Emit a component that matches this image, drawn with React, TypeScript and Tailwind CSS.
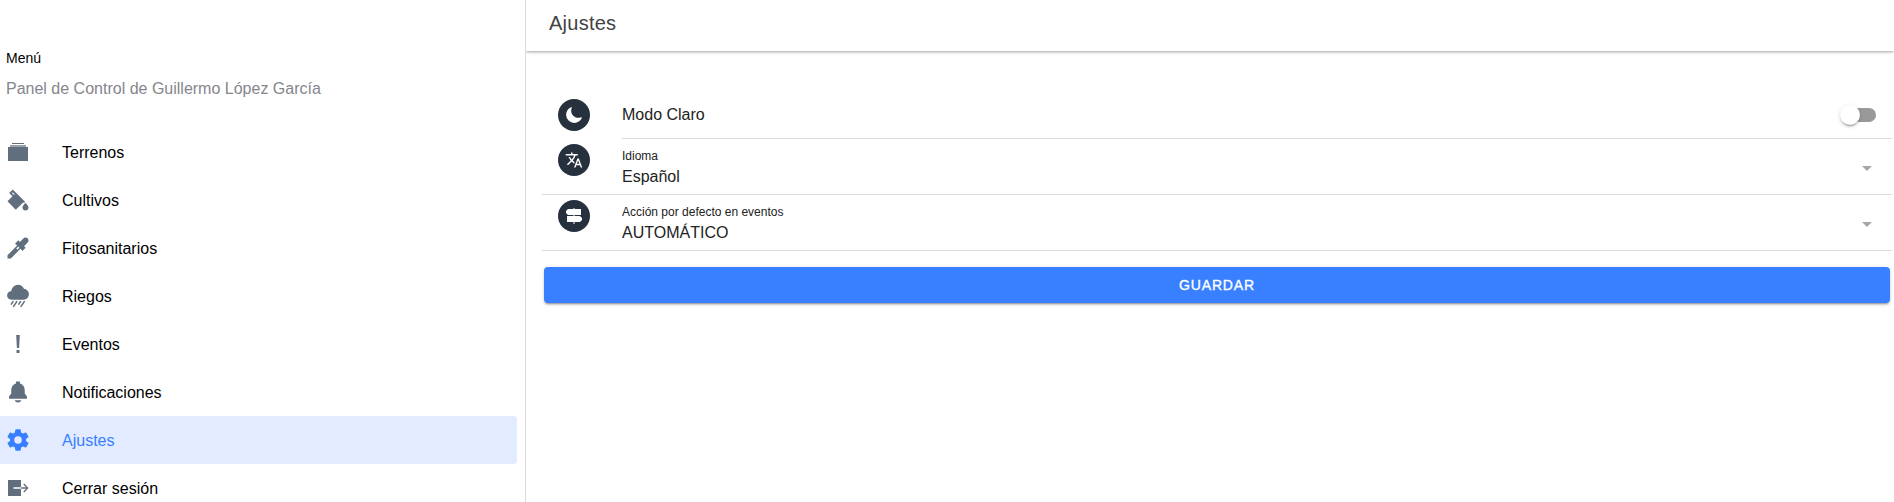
import React from "react";
import type { ReactNode } from "react";
import {
  IoColorFillSharp,
  IoEyedropSharp,
  IoRainySharp,
  IoNotificationsSharp,
  IoSettingsSharp,
  IoMoon,
} from "react-icons/io5";
import { MdTranslate } from "react-icons/md";

type IconProps = { className?: string };

function AlbumsIcon({ className }: IconProps) {
  return (
    <svg className={className} viewBox="0 0 24 24" fill="currentColor">
      <path d="M6 3h12v1H6z" />
      <path d="M4 5h16v2H4z" opacity=".65" />
      <path d="M2 7h20v14H2z" />
    </svg>
  );
}

function AlertIcon({ className }: IconProps) {
  return (
    <svg className={className} viewBox="0 0 24 24" fill="currentColor">
      <path d="M10.2 3h3.6l-.7 13h-2.2zM10.5 18h3v3h-3z" />
    </svg>
  );
}

function ExitIcon({ className }: IconProps) {
  return (
    <svg className={className} viewBox="0 0 24 24" fill="currentColor">
      <path d="M2 4h13v7.3H7.5v1.4H15V20H2z" />
      <path d="M15 11.3h5l-2.7-2.7 1-1 4.2 4.4-4.2 4.4-1-1 2.7-2.7h-5z" />
    </svg>
  );
}

function SignsIcon({ className }: IconProps) {
  return (
    <svg className={className} viewBox="0 0 18 18" fill="currentColor">
      <path d="M8.5 1h1v1H16v6H3L1 6V4l2-2h5.5z" />
      <path d="M2 9h13l2 2v2l-2 2H9.5v2h-1v-2H2z" />
      <path d="M8.5 7.5h1v2h-1z" />
    </svg>
  );
}

const menu: { label: string; icon: React.ComponentType<IconProps>; active?: boolean }[] = [
  { label: "Terrenos", icon: AlbumsIcon },
  { label: "Cultivos", icon: IoColorFillSharp },
  { label: "Fitosanitarios", icon: IoEyedropSharp },
  { label: "Riegos", icon: IoRainySharp },
  { label: "Eventos", icon: AlertIcon },
  { label: "Notificaciones", icon: IoNotificationsSharp },
  { label: "Ajustes", icon: IoSettingsSharp, active: true },
  { label: "Cerrar sesión", icon: ExitIcon },
];

function Badge({ children }: { children: ReactNode }) {
  return (
    <span className="flex size-8 shrink-0 items-center justify-center rounded-full bg-[#27313e] text-white">
      {children}
    </span>
  );
}

function SelectRow({ icon, label, value }: { icon: ReactNode; label: string; value: string }) {
  return (
    <div className="flex h-14 items-start border-b border-[#dcdcdc] pr-5 pl-4">
      <div className="pt-[5px]">
        <Badge>{icon}</Badge>
      </div>
      <div className="ml-8 flex-1 pt-[9px]">
        <div className="text-xs leading-4 text-[#222]">{label}</div>
        <div className="mt-[3px] text-base leading-5 text-[#222]">{value}</div>
      </div>
      <svg className="mt-[27px] h-[5px] w-[10px]" viewBox="0 0 10 5">
        <path d="M0 0h10L5 5z" fill="#a6a6a6" />
      </svg>
    </div>
  );
}

export default function App() {
  return (
    <div className="flex h-[502px] w-full overflow-hidden bg-white font-['Liberation_Sans',Arial,sans-serif] text-black">
      <aside className="h-full w-[526px] shrink-0 overflow-hidden border-r border-[#dadada] pt-12">
        <h1 className="pl-1.5 text-sm leading-5">Menú</h1>
        <p className="mt-[11px] pl-1.5 text-base leading-5 text-[#85868c]">
          Panel de Control de Guillermo López García
        </p>
        <nav className="mt-[29px] w-[517px]">
          {menu.map(({ label, icon: Icon, active }) => (
            <a
              key={label}
              className={
                active
                  ? "flex h-12 items-center rounded-r bg-[#e2ebff] pl-1.5 text-[#3880ff]"
                  : "flex h-12 items-center pl-1.5"
              }
            >
              <Icon className={active ? "size-6 text-[#3880ff]" : "size-6 text-[#616e7e]"} />
              <span className="ml-8 pt-0.5 text-base leading-6">{label}</span>
            </a>
          ))}
        </nav>
      </aside>
      <main className="min-w-0 flex-1 overflow-hidden">
        <header className="flex h-[51px] items-center pb-[5px] pl-[23px] shadow-[0_2px_4px_-1px_rgba(0,0,0,0.2),0_1px_2px_rgba(0,0,0,0.2)]">
          <h2 className="text-xl tracking-[0.0125em] text-[#424242]">Ajustes</h2>
        </header>
        <section className="pt-[39px] pr-0.5 pl-4">
          <div className="flex h-[49px] pl-4">
            <div className="pt-[9px]">
              <Badge>
                <IoMoon className="size-[18px]" />
              </Badge>
            </div>
            <div className="ml-8 flex flex-1 justify-between border-b border-[#dcdcdc] pr-4">
              <span className="pt-[13px] text-base leading-6 text-[#222]">Modo Claro</span>
              <span className="mt-[18px] flex h-3.5 w-[34px] items-center rounded-full bg-[#999]">
                <span className="-ml-0.5 size-5 shrink-0 rounded-full bg-white shadow-[0_3px_1px_-2px_rgba(0,0,0,0.2),0_2px_2px_0_rgba(0,0,0,0.14),0_1px_5px_0_rgba(0,0,0,0.12)]" />
              </span>
            </div>
          </div>
          <SelectRow
            icon={<MdTranslate className="size-[18px]" />}
            label="Idioma"
            value="Español"
          />
          <SelectRow
            icon={<SignsIcon className="size-[18px]" />}
            label="Acción por defecto en eventos"
            value="AUTOMÁTICO"
          />
          <button className="mt-4 ml-0.5 flex h-9 w-[1346px] items-center justify-center rounded bg-[#3880ff] text-sm font-medium tracking-[0.06em] text-white shadow-[0_3px_1px_-2px_rgba(0,0,0,0.2),0_2px_2px_0_rgba(0,0,0,0.14),0_1px_5px_0_rgba(0,0,0,0.12)] [-webkit-text-stroke:0.35px_white]">
            GUARDAR
          </button>
        </section>
      </main>
    </div>
  );
}
